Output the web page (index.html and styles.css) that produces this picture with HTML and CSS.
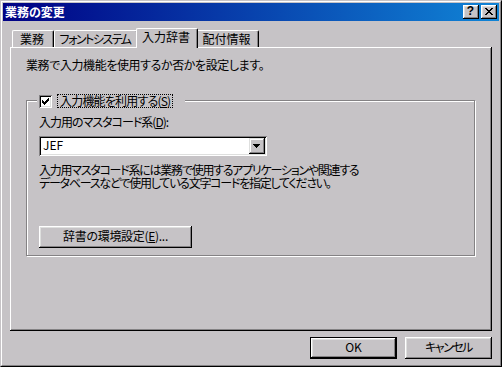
FILE: index.html
```html
<!DOCTYPE html>
<html lang="ja">
<head>
<meta charset="utf-8">
<title>業務の変更</title>
<link rel="stylesheet" href="styles.css">
</head>
<body>
<div class="window">
  <div class="frame">
    <div class="titlebar">
      <span class="title">業務の変更</span>
      <div class="capbtns">
        <div class="capbtn help">?</div>
        <div class="capbtn">
          <svg width="8" height="7" viewBox="0 0 8 7" shape-rendering="crispEdges"><path fill="#000" d="M0 0h2v1H0z M6 0h2v1H6z M1 1h2v1H1z M5 1h2v1H5z M2 2h4v1H2z M3 3h2v1H3z M2 4h4v1H2z M1 5h2v1H1z M5 5h2v1H5z M0 6h2v1H0z M6 6h2v1H6z"/></svg>
        </div>
      </div>
    </div>
    <div class="client">
      <div class="tabs">
        <div class="tab t1">業務</div>
        <div class="tab t2">フォントシステム</div>
        <div class="tab active">入力辞書</div>
        <div class="tab t4">配付情報</div>
      </div>
      <div class="panel">
        <p class="intro">業務で入力機能を使用するか否かを設定します。</p>
        <div class="group">
          <div class="legend">
            <span class="check">
              <svg width="7" height="7" viewBox="0 0 7 7" shape-rendering="crispEdges"><path fill="#000" d="M6 0h1v1H6z M5 1h2v1H5z M0 2h1v1H0z M4 2h3v1H4z M0 3h2v1H0z M3 3h3v1H3z M0 4h5v1H0z M1 5h3v1H1z M2 6h1v1H2z"/></svg>
            </span>
            <span class="focus">入力機能を利用する(<u>S</u>)</span>
          </div>
          <div class="label">入力用のマスタコード系(<u>D</u>):</div>
          <div class="combo">
            <span class="combo-text">JEF</span>
            <span class="combo-btn">
              <svg width="7" height="4" viewBox="0 0 7 4" shape-rendering="crispEdges"><path fill="#000" d="M0 0h7v1H0z M1 1h5v1H1z M2 2h3v1H2z M3 3h1v1H3z"/></svg>
            </span>
          </div>
          <p class="desc">入力用マスタコード系には業務で使用するアプリケーションや関連する<br>データベースなどで使用している文字コードを指定してください。</p>
          <div class="btn dict">辞書の環境設定(<u>E</u>)...</div>
        </div>
      </div>
      <div class="footer">
        <div class="btn default">OK</div>
        <div class="btn cancel">キャンセル</div>
      </div>
    </div>
  </div>
</div>
</body>
</html>
```
FILE: styles.css
```css
* {
  box-sizing: border-box;
  margin: 0;
  padding: 0;
}

html, body {
  width: 502px;
  height: 367px;
  overflow: hidden;
}

body {
  background: #c6c3c6;
  color: #000;
  font-family: "Noto Sans CJK JP", "Noto Sans", sans-serif;
  font-size: 12px;
  line-height: 12px;
  font-feature-settings: "palt";
}

u {
  text-decoration: underline;
  text-underline-offset: 1px;
}

.window {
  width: 502px;
  height: 367px;
  border: 1px solid;
  border-color: #c6c3c6 #000 #000 #c6c3c6;
}

.frame {
  height: 100%;
  border: 1px solid;
  border-color: #fff #848284 #848284 #fff;
  padding: 1px;
  display: flex;
  flex-direction: column;
}

/* title bar */
.titlebar {
  flex: none;
  height: 18px;
  display: flex;
  justify-content: space-between;
  align-items: flex-start;
  padding: 2px 2px 0 2px;
  background: linear-gradient(to right, #000084, #1084d6);
}

.title {
  color: #fff;
  font-weight: 700;
  line-height: 13px;
}

.capbtns {
  display: flex;
  gap: 2px;
}

.capbtn {
  width: 16px;
  height: 14px;
  background: #c6c3c6;
  box-shadow: inset -1px -1px #000, inset 1px 1px #fff, inset -2px -2px #848284, inset 2px 2px #dedfde;
  display: flex;
  align-items: center;
  justify-content: center;
  padding: 0 1px 1px 0;
}

.help {
  font-family: "Liberation Sans", sans-serif;
  font-weight: 700;
  font-size: 12px;
  line-height: 11px;
}

/* client */
.client {
  flex: 1;
  display: flex;
  flex-direction: column;
  padding: 7px 7px 0 7px;
}

.tabs {
  flex: none;
  height: 19px;
  display: flex;
  align-items: flex-end;
  padding-left: 2px;
  position: relative;
  z-index: 1;
}

.tab {
  height: 17px;
  line-height: 16px;
  text-align: center;
  background: #c6c3c6;
  border-top: 1px solid #fff;
  border-left: 1px solid #fff;
  border-right: 1px solid #000;
  border-radius: 2px 2px 0 0;
  box-shadow: inset -1px 0 #848284;
  padding-right: 2px;
  white-space: nowrap;
  overflow: hidden;
}

.t1 { width: 42px; }
.t2 { width: 84px; letter-spacing: -1.5px; }
.t4 { width: 63px; }

.tab.active {
  width: 62px;
  height: 20px;
  margin: 0 -2px -1px -2px;
  position: relative;
  z-index: 2;
}

.panel {
  flex: none;
  height: 284px;
  padding: 12px 0 0 16px;
  box-shadow: inset -1px -1px #000, inset 1px 1px #fff, inset -2px -2px #848284;
}

.intro {
  line-height: 12px;
  letter-spacing: -0.4px;
}

.group {
  width: 449px;
  height: 156px;
  margin-top: 29px;
  border: 1px solid #848284;
  box-shadow: inset 1px 1px #fff, 1px 1px #fff;
  padding-left: 12px;
}

.legend {
  display: flex;
  align-items: flex-start;
  width: max-content;
  height: 14px;
  margin: -7px 0 0 -2px;
  padding: 0 12px 0 2px;
  gap: 5px;
  background: #c6c3c6;
}

.check {
  width: 13px;
  height: 13px;
  margin-top: 1px;
  background: #fff;
  box-shadow: inset 1px 1px #848284, inset -1px -1px #fff, inset 2px 2px #000, inset -2px -2px #dedfde;
  display: flex;
  align-items: center;
  justify-content: center;
}

.focus {
  height: 14px;
  border: 1px dotted #000;
  padding: 0 2px;
  line-height: 12px;
  white-space: nowrap;
  letter-spacing: -0.8px;
}

.label {
  margin-top: 8px;
  line-height: 12px;
  letter-spacing: -1px;
}

.combo {
  width: 228px;
  height: 20px;
  margin-top: 8px;
  padding: 2px;
  background: #fff;
  box-shadow: inset 1px 1px #848284, inset -1px -1px #fff, inset 2px 2px #000, inset -2px -2px #dedfde;
  display: flex;
  justify-content: space-between;
}

.combo-text {
  padding-left: 2px;
  line-height: 14px;
}

.combo-btn {
  width: 16px;
  height: 16px;
  background: #c6c3c6;
  box-shadow: inset -1px -1px #000, inset 1px 1px #dedfde, inset -2px -2px #848284, inset 2px 2px #fff;
  display: flex;
  align-items: center;
  justify-content: center;
  padding: 0 1px 1px 0;
}

.desc {
  margin-top: 7px;
  line-height: 13px;
  white-space: nowrap;
  letter-spacing: -1.25px;
}

.btn {
  height: 22px;
  display: flex;
  align-items: center;
  justify-content: center;
  padding-bottom: 3px;
  line-height: 12px;
  background: #c6c3c6;
  box-shadow: inset -1px -1px #000, inset 1px 1px #fff, inset -2px -2px #848284, inset 2px 2px #dedfde;
  white-space: nowrap;
}

.dict {
  width: 153px;
  margin-top: 37px;
  letter-spacing: -0.3px;
}

.footer {
  flex: none;
  display: flex;
  justify-content: flex-end;
  gap: 8px;
  padding: 6px 0 0 0;
}

.footer .btn {
  width: 87px;
}

.btn.cancel {
  letter-spacing: -1.5px;
}

.btn.default {
  border: 1px solid #000;
}
```
